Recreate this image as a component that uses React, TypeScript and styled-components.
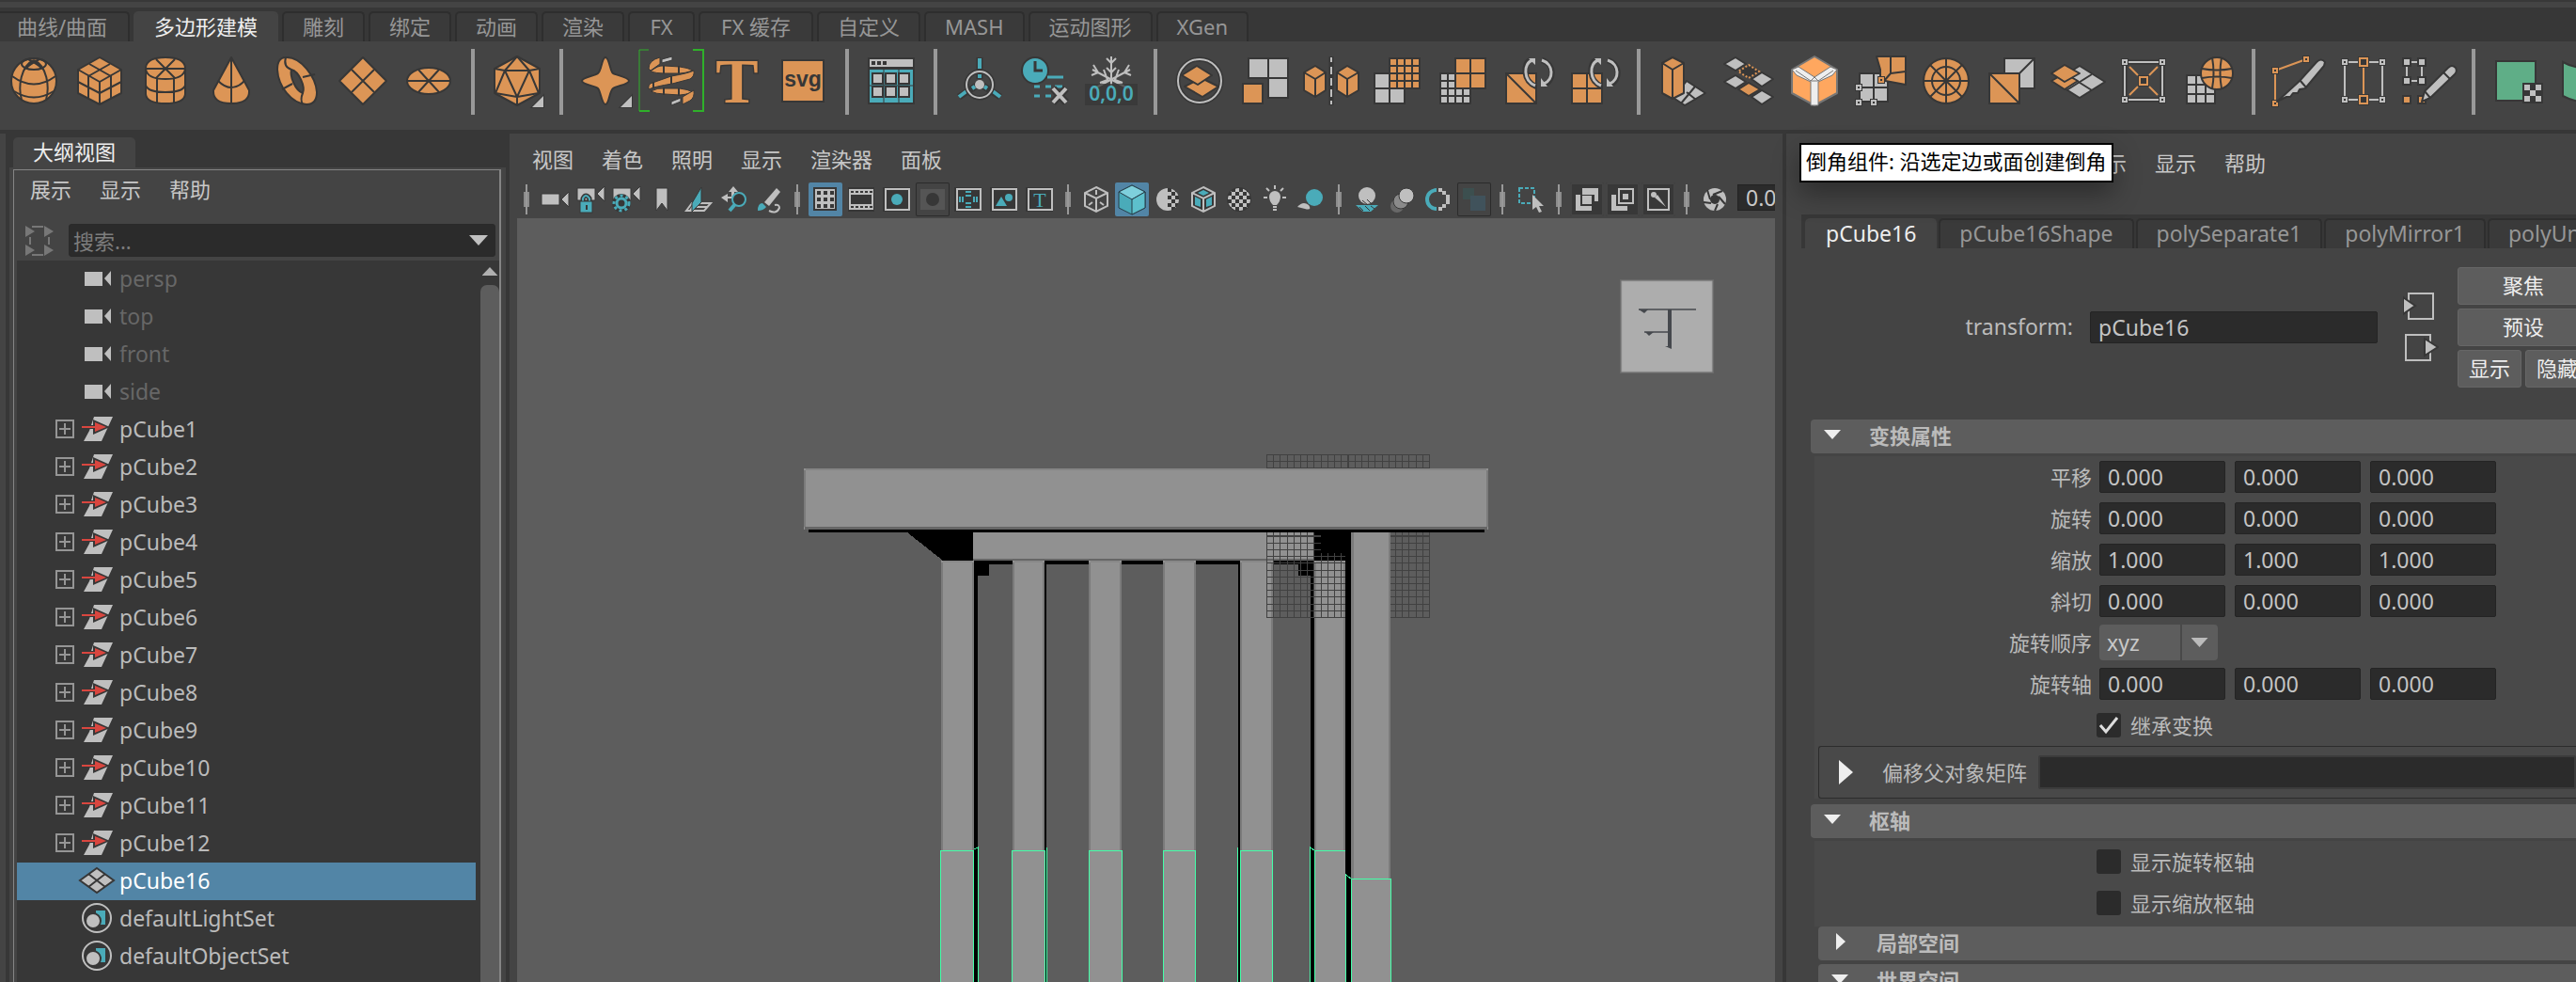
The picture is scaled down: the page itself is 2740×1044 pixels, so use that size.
import React from "react";
import styled, { createGlobalStyle, css } from "styled-components";

const O = "#dc9556";
const T = "#4aabb9";
const G = "#bfbfbf";
const D = "#373737";
const GREEN = "#43ffa8";

const Global = createGlobalStyle`
  *, *::before, *::after { box-sizing: border-box; }
  body { margin: 0; background: #444444; }
  body, button, input, select {
    font-family: "Noto Sans", "Noto Sans CJK SC", sans-serif;
    font-size: 22px;
    line-height: 30px;
  }
  button, input, select { margin: 0; padding: 0; border: 0; color: inherit; background: none; }
  ul { margin: 0; padding: 0; list-style: none; }
`;

const Page = styled.div`
  display: flex;
  flex-direction: column;
  height: 100vh;
  overflow: hidden;
  color: #bbbbbb;
  background: #444444;
`;

/* ---------- shelf ---------- */
const TopEdge = styled.div`
  flex: none;
  height: 8px;
  border-top: 2px solid #383838;
`;
const ShelfTabs = styled.div`
  display: flex;
  flex: none;
  gap: 4px;
  height: 36px;
  padding-top: 4px;
  overflow: hidden;
  background: ${D};
`;
const tabLook = css<{ $active?: boolean }>`
  flex: none;
  height: 32px;
  padding: 0 20px 2px;
  border: 2px solid #2e2e2e;
  border-bottom: 0;
  border-radius: 5px 5px 0 0;
  color: #969696;
  background: #3a3a3a;
  white-space: nowrap;
  ${(p) => p.$active && css`
    color: #eeeeee;
    background: #444444;
    border-color: #444444;
  `}
`;
const ShelfTab = styled.button<{ $active?: boolean; $min?: number }>`
  ${tabLook}
  min-width: ${(p) => p.$min ?? 88}px;
  line-height: 28px;
  &:first-child { margin-left: -6px; }
`;
const Shelf = styled.div`
  display: flex;
  flex: none;
  gap: 6px;
  height: 98px;
  padding: 8px 4px 0;
  overflow: hidden;
  border-bottom: 4px solid ${D};
`;
const ShelfButton = styled.button`
  flex: none;
  width: 64px;
  height: 68px;
  svg { display: block; width: 64px; height: 68px; overflow: visible; }
`;
const ShelfRule = styled.div`
  flex: none;
  width: 18px;
  height: 70px;
  border: solid transparent;
  border-width: 0 7px;
  background: #999999;
  background-clip: padding-box;
`;

/* ---------- shared ---------- */
const Main = styled.div`
  display: flex;
  flex: 1;
  min-height: 0;
`;
const MenuBar = styled.nav<{ $pad: string }>`
  display: flex;
  flex: none;
  gap: 30px;
  padding: ${(p) => p.$pad};
  button { flex: none; color: #c8c8c8; line-height: 30px; }
`;

/* ---------- outliner ---------- */
const Outliner = styled.aside`
  display: flex;
  flex: none;
  flex-direction: column;
  width: 542px;
  border: solid ${D};
  border-width: 0 4px 0 0;
  background: ${D};
  box-shadow: inset 6px 0 #444444;
`;
const OutlinerTab = styled.h2`
  align-self: flex-start;
  height: 32px;
  margin: 4px 0 0 14px;
  padding: 0 21px;
  border-radius: 5px 5px 0 0;
  font-size: 22px;
  font-weight: 400;
  line-height: 30px;
  color: #eeeeee;
  background: #444444;
`;
const OutlinerFrame = styled.div`
  display: flex;
  flex: 1;
  min-height: 0;
  margin-left: 10px;
  padding: 2px 5px 0 4px;
  background: #444444;
`;
const OutlinerBody = styled.div`
  display: flex;
  flex: 1;
  flex-direction: column;
  border: solid #858585;
  border-width: 1px 2px 0 1px;
`;
const SearchRow = styled.div`
  display: flex;
  align-items: center;
  gap: 16px;
  padding: 16px 4px 4px 11px;
  svg { flex: none; }
`;
const SearchBox = styled.label`
  display: flex;
  flex: 1;
  align-items: center;
  height: 35px;
  padding: 0 7px 0 4px;
  border: 1px solid #2a2a2a;
  border-radius: 3px;
  background: #2b2b2b;
  input { flex: 1; min-width: 0; outline: 0; height: 30px; }
  input::placeholder { color: #7d7d7d; opacity: 1; }
`;
const Caret = styled.span<{ $w: number; $h: number; $dir: "up" | "down" | "right"; $color: string }>`
  flex: none;
  width: ${(p) => p.$w}px;
  height: ${(p) => p.$h}px;
  background: ${(p) => p.$color};
  clip-path: ${(p) =>
    p.$dir === "down" ? "polygon(0 0, 100% 0, 50% 100%)"
      : p.$dir === "up" ? "polygon(0 100%, 50% 0, 100% 100%)"
      : "polygon(0 0, 100% 50%, 0 100%)"};
`;
const TreeArea = styled.div`
  display: flex;
  flex: 1;
  min-height: 0;
  margin-left: 3px;
  overflow: hidden;
  background: ${D};
`;
const Tree = styled.ul`
  flex: 1;
`;
const TreeRow = styled.li<{ $selected?: boolean; $dim?: boolean }>`
  display: grid;
  grid-template-columns: 20px 40px 1fr;
  align-items: center;
  column-gap: 4px;
  height: 40px;
  padding: 0 0 2px 41px;
  font-size: 23px;
  color: ${(p) => (p.$selected ? "#ffffff" : p.$dim ? "#676767" : "#bbbbbb")};
  background: ${(p) => (p.$selected ? "#5285a6" : "transparent")};
  svg { display: block; }
`;
const Expander = styled.button`
  height: 20px;
`;
const ScrollTrack = styled.div`
  display: flex;
  flex: none;
  flex-direction: column;
  align-items: center;
  gap: 10px;
  width: 25px;
  padding: 7px 0 0 5px;
`;
const ScrollThumb = styled.div`
  flex: 1;
  width: 20px;
  border-radius: 7px 7px 0 0;
  background: #5d5d5d;
`;

/* ---------- viewport ---------- */
const Viewport = styled.section`
  display: flex;
  flex: 1;
  flex-direction: column;
  min-width: 0;
`;
const ToolRow = styled.div`
  display: flex;
  flex: none;
  gap: 2px;
  height: 38px;
  margin: 0 8px;
  overflow: hidden;
`;
const Tool = styled.button<{ $on?: boolean; $boxed?: boolean; $dark?: boolean }>`
  flex: none;
  width: 36px;
  height: 36px;
  border-radius: 2px;
  background: ${(p) => (p.$on ? "#5285a6" : "transparent")};
  ${(p) => p.$boxed && css`box-shadow: inset 0 0 0 1px #2b2b2b;`}
  ${(p) => p.$dark && css`box-shadow: inset 0 0 0 2px #444444; background: #383838;`}
  svg { display: block; width: 36px; height: 36px; }
`;
const ToolRule = styled.div`
  flex: none;
  width: 20px;
  height: 36px;
  background: linear-gradient(#999999, #999999) center / 2px 32px no-repeat,
    linear-gradient(#8c8c8c, #8c8c8c) center / 6px 16px no-repeat;
`;
const Exposure = styled.input`
  flex: none;
  width: 90px;
  height: 28px;
  margin: 2px 0 0 4px;
  padding-left: 8px;
  border: 1px solid #222222;
  font-size: 23px;
  color: #c8c8c8;
  background: #2b2b2b;
`;
const Canvas = styled.div`
  flex: 1;
  min-height: 0;
  margin: 0 8px;
  overflow: hidden;
  background: #5d5d5d;
  svg { display: block; width: 100%; height: 100%; }
`;

/* ---------- attribute editor ---------- */
const Attributes = styled.aside`
  position: relative;
  flex: none;
  width: 844px;
  border-left: 4px solid ${D};
`;
const Clip = styled.div`
  height: 100%;
  overflow: hidden;
`;
const Tooltip = styled.div`
  position: absolute;
  top: 10px;
  left: 14px;
  height: 42px;
  padding: 2px 5px;
  border: 2px solid #000000;
  white-space: nowrap;
  color: #000000;
  background: #ffffff;
  box-shadow: 0 12px 28px rgba(0, 0, 0, 0.35);
`;
const AttrTabs = styled.div`
  display: flex;
  gap: 2px;
  height: 36px;
  margin-left: 16px;
  padding: 4px 0 0 4px;
  overflow: hidden;
  background: ${D};
`;
const AttrTab = styled.button<{ $active?: boolean }>`
  ${tabLook}
  font-size: 23px;
  line-height: 28px;
`;
const NodeRow = styled.div`
  display: grid;
  grid-template-columns: 305px 306px 49px 140px;
  align-items: center;
  column-gap: 18px;
  height: 168px;
  margin-bottom: 14px;
  > label { justify-self: end; padding-bottom: 2px; font-size: 23px; }
`;
const fieldLook = css`
  height: 34px;
  border: 1px solid #242424;
  border-radius: 2px;
  padding: 0 8px;
  font-size: 23px;
  color: #c4c4c4;
  background: #2b2b2b;
  outline: 0;
`;
const NameField = styled.input`
  ${fieldLook}
  width: 100%;
`;
const PortStack = styled.div`
  display: grid;
  gap: 12px;
  margin-left: 9px;
  button { height: 32px; }
  svg { display: block; }
`;
const ButtonGrid = styled.div`
  display: grid;
  grid-template-columns: 68px 68px;
  gap: 4px;
`;
const PushButton = styled.button<{ $wide?: boolean }>`
  grid-column: ${(p) => (p.$wide ? "span 2" : "auto")};
  height: 40px;
  padding-bottom: 2px;
  border: 1px solid #666666;
  border-radius: 3px;
  color: #eeeeee;
  background: #5d5d5d;
`;
const Section = styled.button<{ $nested?: boolean }>`
  display: flex;
  align-items: center;
  width: calc(100% - ${(p) => (p.$nested ? 34 : 26)}px);
  height: 36px;
  margin: 0 0 ${(p) => (p.$nested ? 4 : 3)}px ${(p) => (p.$nested ? 34 : 26)}px;
  padding-bottom: 2px;
  border-radius: 4px 0 0 4px;
  font-weight: 700;
  color: #bbbbbb;
  background: #5d5d5d;
  text-align: left;
`;
const CaretSlot = styled.span<{ $closed?: boolean }>`
  display: grid;
  place-items: center start;
  flex: none;
  width: 62px;
  padding: 0 0 2px ${(p) => (p.$closed ? 19 : 14)}px;
`;
const SectionBody = styled.div<{ $last?: boolean }>`
  margin-left: 30px;
  padding-bottom: ${(p) => (p.$last ? 3 : 0)}px;
  margin-bottom: ${(p) => (p.$last ? 0 : 6)}px;
  background: #494949;
`;
const AttrRow = styled.div`
  display: grid;
  grid-template-columns: 296px 134px 134px 134px;
  align-items: center;
  column-gap: 10px;
  height: 44px;
  margin-left: -3px;
  > :first-child { justify-self: end; margin-right: -2px; }
`;
const NumField = styled.input`
  ${fieldLook}
  width: 134px;
`;
const SelectBox = styled.span`
  display: grid;
  grid-template-columns: 87px 39px;
  align-items: center;
  width: 126px;
  height: 38px;
  border-radius: 4px;
  background: linear-gradient(#494949, #494949) 86px 0 / 2px 100% no-repeat #5d5d5d;
  select {
    grid-area: 1 / 1 / 2 / 3;
    height: 38px;
    padding: 0 8px;
    appearance: none;
    outline: 0;
    font-size: 23px;
    color: #c8c8c8;
  }
  span { grid-area: 1 / 2 / 2 / 3; justify-self: center; pointer-events: none; }
`;
const CheckRow = styled.div`
  display: flex;
  align-items: center;
  height: 44px;
  padding-left: 300px;
`;
const CheckLabel = styled.label`
  display: grid;
  grid-template-columns: 26px auto;
  align-items: center;
  column-gap: 10px;
  input {
    grid-area: 1 / 1;
    width: 26px;
    height: 26px;
    border-radius: 3px;
    appearance: none;
    background: #2b2b2b;
  }
  svg { grid-area: 1 / 1; display: none; pointer-events: none; }
  input:checked + svg { display: block; }
`;
const MatrixRow = styled.div`
  display: flex;
  align-items: center;
  height: 56px;
  margin-left: 4px;
  border: solid #2c2c2c;
  border-width: 1px 0 1px 1px;
  border-radius: 3px 0 0 3px;
  label { flex: none; margin: 0 12px 0 31px; }
  input { ${fieldLook} flex: 1; min-width: 0; height: 36px; border: 2px solid #3c3c3c; }
  button { display: grid; margin-left: 21px; }
`;

/* ---------- shelf artwork (origin at icon centre) ---------- */
const Ink = (p: { children: React.ReactNode; fill?: string; w?: number }) => (
  <g fill={p.fill ?? O} stroke={D} strokeWidth={p.w ?? 2} strokeLinejoin="round">{p.children}</g>
);
const Mesh = (p: { x: number; y: number; w: number; h: number; c?: number; r?: number; fill: string }) => {
  const c = p.c ?? 1, r = p.r ?? 1;
  const lines: React.ReactNode[] = [];
  for (let i = 1; i < c; i++) lines.push(<path key={"c" + i} d={`M${p.x + (p.w * i) / c} ${p.y}v${p.h}`} />);
  for (let i = 1; i < r; i++) lines.push(<path key={"r" + i} d={`M${p.x} ${p.y + (p.h * i) / r}h${p.w}`} />);
  return (
    <g fill={p.fill} stroke={D} strokeWidth="2">
      <rect x={p.x} y={p.y} width={p.w} height={p.h} />
      {lines}
    </g>
  );
};
const Corner = () => <path d="M28 16V28H16Z" fill={G} stroke={D} strokeWidth="2" paintOrder="stroke" />;
const Node = (p: { x: number; y: number; c: string; s?: number }) => {
  const s = p.s ?? 3;
  return (
    <g>
      <rect x={p.x - s - 1} y={p.y - s - 1} width={2 * s + 2} height={2 * s + 2} fill={D} />
      <rect x={p.x - s + 1} y={p.y - s + 1} width={2 * s - 2} height={2 * s - 2} fill={D} stroke={p.c} strokeWidth="2" />
    </g>
  );
};
const Cycle = () => (
  <g fill="none" stroke={G} strokeWidth="3">
    <path d="M8 6C-7 0-6-20 2-22M14-22C28-18 28 0 16 4" stroke={D} strokeWidth="6" />
    <path d="M7 5C-6 0-6-19 4-22M14-22C27-18 27-1 16 3" />
    <path d="M0-24H7V-17ZM13-3V6H20Z" fill={G} stroke="none" />
  </g>
);

const art: Record<string, React.ReactNode> = {
  sphere: (
    <Ink><circle r="24" />
      <g fill="none"><ellipse cx="0" cy="-18" rx="13" ry="6" /><path d="M-23-5Q0 12 23-5M-21 11Q0 24 21 11M0-22C-14-16-17 6-13 20M0-22C14-16 17 6 13 20M-6-23Q4-18 9-13M6-23Q-4-18-9-13" /></g>
    </Ink>
  ),
  cube: (
    <Ink><path d="M0-25L23-12V13L0 25L-23 13V-12Z" />
      <path fill="none" d="M-23-12L0 1L23-12M0 1V25M-11-18L12-5V19M11-18L-12-5V19M-23 1L0 13L23 1" /></Ink>
  ),
  cylinder: (
    <Ink><path d="M-21-14Q-20-25 0-25T21-14V14Q20 24 0 24T-21 14Z" />
      <path fill="none" d="M-21-13Q-20-2 0-2T21-13M-21-13H21M-10-23L10-3M10-23L-10-3M-9-2V24M9-2V24M-21 5Q-18 12 0 12T21 5" /></Ink>
  ),
  cone: (
    <Ink><path d="M0-25L19 10Q20 24 0 24T-19 10Z" /><path fill="none" d="M0-25V24M-14 0Q0 14 14 0" /></Ink>
  ),
  torus: (
    <Ink><path fillRule="evenodd" d="M-12-25C4-26 20-4 21 12C21 21 17 25 10 25C-6 24-20 6-21-12C-21-21-18-25-12-25ZM-6-12C-8-5-2 10 6 13C9 6 2-10-6-12Z" />
      <path fill="none" d="M-12-25Q-15-15-6-12M6-4L19-7M-5 3L-16 9M6 13Q3 20 6 25" /></Ink>
  ),
  plane: <Ink><path d="M0-25L25 0L0 25L-25 0Z" /><path d="M-12-12L12 12M12-12L-12 12" /></Ink>,
  disc: <Ink><ellipse rx="23" ry="14" /><path d="M-23 0H23M-11-12L11 12M11-12L-11 12" /></Ink>,
  solid: (
    <><Ink><path d="M0-26L24-13V13L0 26L-24 13V-13Z" />
      <path fill="none" d="M0-26L-13-11H13ZM-24-13L-13-11L-23 13L0 17L23 13L13-11L24-13M-13-11L0 17L13-11M0 17V26" /></Ink><Corner /></>
  ),
  star: (
    <><Ink><path d="M0-25C4-25 5-10 8-8S25-4 25 0S12 5 8 8S4 25 0 25S-5 11-8 8S-25 4-25 0S-12-5-8-8S-4-25 0-25Z" /></Ink><Corner /></>
  ),
  sweep: (
    <>
      <path d="M-24-33H-34V32H-24" fill="none" stroke="#2fb02a" strokeWidth="1" />
      <path d="M-34 32H-23M23 32H34V-33H23" fill="none" stroke="#2fb02a" strokeWidth="2" />
      <Ink w={1}>
        <path d="M-24-13Q-24-22-12-25V-18L-22-11Z" />
        <path fill={G} d="M-10-23L1-26V-22L-10-19Z" />
        <path d="M-22-10Q-14-17-8-16H-7L9-15Q18-14 23-11Q14-8 9-8H-7Q-16-8-22-10Z" />
        <path d="M-24 9Q-25 3-20 2L0-5Q18-8 24-11Q25-5 20-2L1 3Q-18 6-24 9Z" />
        <path d="M-22 11Q-14 7-7 8L9 8Q18 9 23 12Q14 15 9 15L-7 14Q-16 14-22 11Z" />
        <path d="M24 10Q25 18 20 21L12 25V17Z" />
        <path fill={G} d="M0 22L10 18V22L0 26Z" />
      </Ink>
      <path d="M-8-16V-8M8-16V-8M0-5V3M-19 1V8M-8 7V15M8 8V16" stroke={D} strokeWidth="2" />
    </>
  ),
  type: (
    <text x="0" y="23" textAnchor="middle" fontFamily="Liberation Serif, serif" fontWeight="700" fontSize="68" fill={O} stroke={D} strokeWidth="3" paintOrder="stroke">T</text>
  ),
  svg: (
    <><rect x="-22" y="-22" width="44" height="44" fill={O} stroke={D} strokeWidth="2" />
      <text x="0" y="6" textAnchor="middle" fontFamily="Liberation Sans, sans-serif" fontWeight="700" fontSize="23" fill={D}>svg</text></>
  ),
  panel: (
    <><rect x="-25" y="-25" width="50" height="50" fill={D} /><rect x="-23" y="-23" width="46" height="8" fill={G} />
      <path d="M-21-21h4v4h-4zM-15-21h4v4h-4zM-9-21h4v4h-4z" fill={D} /><rect x="-23" y="-12" width="46" height="35" fill={T} />
      {[-20, -6, 8].map((x) => [-8, 6].map((y) => <rect key={x + "," + y} x={x} y={y} width="11" height="11" fill={G} stroke={D} strokeWidth="2" />))}
      <path d="M-8-12V23M8-12V23M-23 5H23" stroke={D} /></>
  ),
  joint: (
    <><path d="M0-25V-2M-22 17L0 3L22 17" fill="none" stroke={D} strokeWidth="7" /><path d="M0-24V-13M0-7V-3M-22 17L-14 11M22 17L14 11M-8 8L-5 6M8 8L5 6" stroke={T} strokeWidth="4" />
      <circle cy="4" r="14" fill="none" stroke={D} strokeWidth="5" /><circle cy="4" r="14" fill="none" stroke={G} strokeWidth="2" /><circle cy="4" r="5" fill={G} /></>
  ),
  history: (
    <><circle cx="-11" cy="-11" r="14" fill={T} stroke={D} strokeWidth="2" /><path d="M-11-21V-11H-3" fill="none" stroke={D} strokeWidth="3" />
      <path d="M2-4H19M-12 6H-6M0 6H6M10 6H18M-12 16H-6M0 16H6" stroke={T} strokeWidth="3" /><path d="M8 8L22 23M22 8L8 23" stroke={D} strokeWidth="8" /><path d="M8 8L22 23M22 8L8 23" stroke={G} strokeWidth="4" /></>
  ),
  freeze: (
    <><g stroke={G} strokeWidth="2" fill="none"><path d="M0-26V6M-20-12L18 8M20-12L-18 8M-5-24L0-19L5-24M-5-14L0-9L5-14M-19-17L-14-9L-21-6M19-17L14-9L21-6M-8-12L-4-1L-12 2M8-12L4-1L12 2" /></g>
      <rect x="-28" y="3" width="56" height="23" fill={D} opacity=".75" />
      <text x="0" y="21" textAnchor="middle" fontFamily="Noto Sans, sans-serif" fontWeight="600" fontSize="21" fill={T}>0,0,0</text></>
  ),
  layers: (
    <><circle r="23" fill="none" stroke={D} strokeWidth="5" /><circle r="23" fill="none" stroke={G} strokeWidth="2" />
      <Ink><path d="M2-3L20 6L3 17L-16 6Z" /><path d="M-3-16L13-6L-2 4L-19-6Z" /></Ink></>
  ),
  separate: (
    <><Mesh x={-18} y={-24} w={42} h={21} c={2} fill={G} /><Mesh x={3} y={-3} w={21} h={21} fill={G} /><Mesh x={-24} y={3} w={21} h={21} fill={O} /></>
  ),
  mirror: (
    <><path d="M0-26V26" stroke={D} strokeWidth="5" /><path d="M0-25v5M0-15v8M0-3v8M0 9v8M0 21v4" stroke={G} strokeWidth="2" />
      <Ink><path d="M17-16L29-9V10L17 17L6 10V-9Z" /><path fill="none" d="M6-9L17-2L29-9M17-2V17" /><path d="M-17-16L-29-9V10L-17 17L-6 10V-9Z" /><path fill="none" d="M-6-9L-17-2L-29-9M-17-2V17" /></Ink></>
  ),
  smooth: (
    <><Mesh x={-24} y={-8} w={32} h={32} c={2} r={2} fill={G} /><Mesh x={-8} y={-24} w={32} h={32} c={4} r={4} fill={O} /></>
  ),
  reduce: (
    <><Mesh x={-24} y={-8} w={32} h={32} c={4} r={4} fill={G} /><Mesh x={-8} y={-24} w={32} h={32} c={2} r={2} fill={O} /></>
  ),
  triangulate: <><Mesh x={-24} y={-8} w={32} h={32} fill={O} /><path d="M-24-8L8 24" stroke={D} strokeWidth="2" /><Cycle /></>,
  quad: <><Mesh x={-24} y={-8} w={32} h={32} c={2} r={2} fill={O} /><Cycle /></>,
  extrude: (
    <><Ink fill={G}><path d="M4 0L24 13L2 26L-10 18Z" /><path d="M13 6L-2 24M4 12L14 20" /></Ink>
      <Ink><path d="M-11-25L1-19V13L-11 19L-22 13V-19Z" /><path fill="none" d="M-22-19L-11-12L1-19M-11-12V19" /></Ink></>
  ),
  bridge: (
    <><Ink fill={G}><path d="M-14-25L-3-18L-14-11L-26-18Z" /><path d="M14-9L26-2L14 6L3-2Z" /><path d="M-14-6L-3 1L-14 8L-26 1Z" /><path fill={O} d="M0 2L12 9L0 16L-11 9Z" /><path d="M14 10L26 17L14 25L3 17Z" /></Ink>
      <path d="M0-17L11-10L0-3L-11-10Z" fill={D} stroke={O} strokeWidth="2" strokeDasharray="2 2" /></>
  ),
  bevel: (
    <g stroke="#767676" strokeWidth="2" strokeLinejoin="round"><path d="M0-26L24-12V13L0 26L-24 13V-12Z" fill="#ffa75f" />
      <path d="M-24-12L-17-15L0-4L17-15L24-12L19-6L4 1V26H-4V1L-19-6Z" fill="#eeeeee" strokeWidth="1" /><path d="M-20-11L-4 0L0-4L4 0L20-11M-4 0H4" fill="none" strokeWidth="1" /></g>
  ),
  boolean: (
    <><Mesh x={-22} y={-8} w={30} h={30} c={2} r={2} fill={G} /><Ink><path d="M-4-26H27V4L0-1V-12Z" /><path d="M11-26V-8L27-10M11-8L4 0" /></Ink>
      <Node x={1} y={-1} c={O} /><Node x={-23} y={7} c={G} /><Node x={-23} y={23} c={G} /><Node x={-7} y={23} c={G} /></>
  ),
  circularize: (
    <Ink><circle r="24" /><circle r="15" fill="none" /><path d="M-24 0H24M0-24V24M-17-17L17 17M17-17L-17 17" /></Ink>
  ),
  wedge: (
    <><Mesh x={-8} y={-24} w={32} h={32} fill={G} /><path d="M24-24L-8 8" stroke={D} strokeWidth="2" /><Mesh x={-24} y={-8} w={32} h={32} fill={O} /><path d="M-24-8L8 24" stroke={D} strokeWidth="2" /></>
  ),
  duplicate: (
    <><Ink fill={G}><path d="M2-16L29 1L2 18L-25 1Z" /><path d="M-12-7L15 10M15-7L-12 10" /></Ink><Ink><path d="M-14-8L0 0L-14 9L-28 0Z" /><path d="M-14-17L2-8L-14 1L-28-8Z" /></Ink></>
  ),
  quadDraw: (
    <><rect x="-20" y="-20" width="40" height="40" fill="none" stroke={D} strokeWidth="5" /><rect x="-20" y="-20" width="40" height="40" fill="none" stroke={G} strokeWidth="2" />
      <path d="M-15-15L-6-6M15-15L6-6M-15 15L-6 6M15 15L6 6" stroke={O} strokeWidth="2" />
      <Node x={0} y={0} c={O} s={5} /><Node x={-20} y={-20} c={G} /><Node x={20} y={-20} c={G} /><Node x={-20} y={20} c={G} /><Node x={20} y={20} c={G} /></>
  ),
  project: (
    <><Mesh x={-24} y={-6} w={30} h={30} c={3} r={3} fill={G} /><Ink><circle cx="8" cy="-8" r="17" /><path fill="none" d="M-8-13Q8-10 24-13M-8-3Q8-6 24-3M3-25Q6-8 3 8M13-25Q10-8 13 8" /></Ink></>
  ),
  multicut: (
    <><path d="M-24 24V-11L9-23" fill="none" stroke={O} strokeWidth="2" /><Node x={9} y={-23} c={O} /><Node x={-24} y={-11} c={O} /><Node x={-24} y={24} c={O} />
      <Ink fill={G}><path d="M-22 22L2 0L20-20Q25-25 29-20L28-16L8 8L2 9L0 13L-5 13L-8 17L-12 17Z" /><path d="M2-1L9 7" /></Ink></>
  ),
  connect: (
    <><path d="M-20-20H20M-20 20H20M-20-20V20M20-20V20" stroke={G} strokeWidth="2" /><path d="M0-20V20" stroke={O} strokeWidth="2" />
      <Node x={-20} y={-20} c={G} /><Node x={20} y={-20} c={G} /><Node x={-20} y={20} c={G} /><Node x={20} y={20} c={G} /><Node x={0} y={-20} c={O} s={5} /><Node x={0} y={20} c={O} s={5} /></>
  ),
  sculpt: (
    <><path d="M-24-20H-8V0H-24Z" fill="none" stroke={G} strokeWidth="2" /><g fill={G} stroke={D} strokeWidth="2"><path d="M-28-24h8v8h-8zM-12-24h8v8h-8zM-28-4h8v8h-8zM-12-4h8v8h-8z" /></g>
      <path d="M-28 16h8v8h-8zM-12 16h8v8h-8z" fill={O} stroke={D} strokeWidth="2" />
      <Ink fill={G}><path d="M-8 22L-5 11L20-14Q24-18 28-14Q30-10 27-7L1 18Z" /><path d="M-5 11L1 18M15-9L22-2" /></Ink></>
  ),
  uv: (
    <><rect x="-23" y="-21" width="42" height="42" fill="#5fae87" stroke={D} strokeWidth="2" /><rect x="5" y="2" width="22" height="22" fill={D} />
      <path d="M7 4h6v6h-6zM19 4h6v6h-6zM13 10h6v6h-6zM7 16h6v6h-6zM19 16h6v6h-6z" fill={G} /></>
  ),
  uvCylinder: <path d="M-22-20Q0-8 22-20V16Q0 28-22 16Z" fill="#5fae87" stroke={D} strokeWidth="2" />,
};
const shelfItems = [
  "sphere", "cube", "cylinder", "cone", "torus", "plane", "disc", "|", "solid", "|", "star", "sweep", "type", "svg", "|",
  "panel", "|", "joint", "history", "freeze", "|", "layers", "separate", "mirror", "smooth", "reduce", "triangulate", "quad", "|",
  "extrude", "bridge", "bevel", "boolean", "circularize", "wedge", "duplicate", "quadDraw", "project", "|",
  "multicut", "connect", "sculpt", "|", "uv", "uvCylinder",
];
const shelfTabs: [string, number?][] = [
  ["曲线/曲面", 144], ["多边形建模"], ["雕刻"], ["绑定"], ["动画"], ["渲染"], ["FX", 71], ["FX 缓存", 122],
  ["自定义"], ["MASH"], ["运动图形"], ["XGen"],
];

/* ---------- viewport toolbar artwork ---------- */
const Frame = (p: { children?: React.ReactNode }) => (
  <><rect x="-15" y="-13" width="29" height="26" fill={D} /><rect x="-12" y="-11" width="25" height="22" fill="none" stroke={G} strokeWidth="2" />{p.children}</>
);
const MiniCam = () => <path d="M-14-12H5V1H-14ZM7-6L15-14V2Z" fill={G} stroke={D} strokeWidth="1" />;
const checks = (left: number) => {
  const out: React.ReactNode[] = [];
  for (let i = left; i < 3; i++) for (let j = -3; j < 3; j++) if ((i + j) % 2 === 0) out.push(<rect key={i + "," + j} x={i * 4} y={j * 4} width="4" height="4" />);
  return <g clipPath="url(#roundMask)">{out}</g>;
};
const tools: Record<string, React.ReactNode> = {
  camera: <path d="M-14-6H5V6H-14ZM7 0L15-8V8Z" fill={G} stroke={D} strokeWidth="1" />,
  lock: <><MiniCam /><path d="M-8 2V-1Q-5-7-1-1V2" fill="none" stroke={D} strokeWidth="5" /><path d="M-8 2V-1Q-5-7-1-1V2" fill="none" stroke={T} strokeWidth="2" /><rect x="-11" y="2" width="13" height="12" fill={T} stroke={D} /><path d="M-4 6V11" stroke={D} strokeWidth="2" /></>,
  gear: <><MiniCam /><circle cx="-5" cy="4" r="10" fill={D} /><circle cx="-5" cy="4" r="8" fill="none" stroke={T} strokeWidth="3" strokeDasharray="3 3" /><circle cx="-5" cy="4" r="5" fill="none" stroke={T} strokeWidth="3" /></>,
  bookmark: <path d="M-6-12H6V12L0 4L-6 12Z" fill={G} stroke={D} />,
  image: <><path d="M-12 12L-6 4H14L7 12Z" fill="none" stroke={G} strokeWidth="2" /><path d="M-4 8H10M-8 12L0 0" stroke={G} strokeWidth="2" /><path d="M-6 4L4-13V3L-6 13Z" fill={T} stroke={D} /></>,
  zoom: <><path d="M0-14L5-8H1V-1H-6V3L-13-2L-6-6V-3H-2V-8H-5Z" fill={G} /><circle cx="6" cy="0" r="7" fill={D} stroke={T} strokeWidth="2" /><path d="M2 5L-4 12" stroke={T} strokeWidth="4" /></>,
  pencil: <><path d="M-5 3L8-12L12-8L0 7Z" fill={G} /><path d="M-12 12Q-12 4-7 4L-3 8Q-6 12-12 12Z" fill={T} /><path d="M0 12Q8 16 11 9Q11 5 6 6" fill="none" stroke={G} strokeWidth="2" /></>,
  grid: <><rect x="-13" y="-13" width="25" height="25" fill={D} /><rect x="-11" y="-11" width="21" height="21" fill={G} />{[-9, -2, 5].map((x) => [-9, -2, 5].map((y) => <rect key={x + "," + y} x={x} y={y} width="4" height="4" fill={D} />))}</>,
  film: <><rect x="-14" y="-13" width="28" height="26" fill={D} /><rect x="-13" y="-11" width="26" height="22" fill={G} /><rect x="-11" y="-5" width="22" height="10" fill={D} /><path d="M-11-8H12M-11 8H12" stroke={D} strokeWidth="2" strokeDasharray="3 2" /></>,
  gate: <Frame><circle r="6" fill={T} /></Frame>,
  mask: <><rect x="-13" y="-11" width="26" height="22" fill="#555555" /><circle r="7" fill={D} /></>,
  chart: <Frame><path d="M-3-8H3M-3-4H3M-3 4H3M-3 8H3M-9-3V3M-6-3V3M9-3V3M6-3V3" stroke={T} strokeWidth="2" /></Frame>,
  safe: <Frame><path d="M-9 7L-3-3L3 7Z" fill={T} /><circle cx="5" cy="-2" r="4" fill={T} /></Frame>,
  title: <Frame><text x="0" y="8" textAnchor="middle" fontFamily="Liberation Serif, serif" fontSize="22" fill={T}>T</text></Frame>,
  wire: <g fill="none" stroke={G} strokeWidth="2"><path d="M0-13L12-7V7L0 13L-12 7V-7ZM-12-7L0-1L12-7M0-1V13M0-10V-5M-8 6L-4 3M8 6L4 3" /></g>,
  shaded: <g stroke="#263d49" strokeLinejoin="round"><path d="M0-15L14-8V9L0 16L-14 9V-8Z" fill={T} /><path d="M0-15L14-8L0 0L-14-8Z" fill="#7ed0dc" /><path d="M14-8V9L0 16V0Z" fill="#5dc0cc" /></g>,
  half: <g fill={G}><circle r="12" fill={D} /><path d="M0-12A12 12 0 0 0 0 12Z" />{checks(0)}</g>,
  texture: <g stroke={G} strokeWidth="2" fill={D}><path d="M0-13L12-7V7L0 13L-12 7V-7Z" /><path fill="none" d="M-12-7L0-1L12-7M0-1V13" /><path stroke="none" fill={T} d="M0-10L6-7L0-4L-6-7ZM-9-3L-3 0V8L-9 6ZM9-3L3 0V8L9 6Z" /></g>,
  alpha: <g fill={G}><circle r="13" fill={D} />{checks(-3)}</g>,
  light: <><path d="M-6-3A6 6 0 0 1 6-3Q6 2 2 6H-2Q-6 2-6-3Z" fill={G} /><path d="M0-15V-11M-9-12L-6-9M9-12L6-9M-12-2H-8M12-2H8M-2 8H2M-2 11H2" stroke={G} strokeWidth="2" /></>,
  shadow: <><circle cx="4" cy="-2" r="9" fill={T} /><path d="M-14 8Q-8 1-2 6Q2 12-6 10Z" fill={G} /></>,
  ao: <><circle cy="-4" r="9" fill={G} /><path d="M-12 6H12L4 13H-4Z" fill={T} /><path d="M-5 1L1 6M0 0L5 5M-8 8L-4 12M-2 7L3 12M4 7L8 10" stroke={D} /></>,
  blur: <><circle cx="-6" cy="7" r="7" fill="#686868" /><circle cx="-2" cy="2" r="8" fill="#8a8a8a" stroke={D} /><circle cx="4" cy="-4" r="8" fill={G} stroke={D} /></>,
  aa: <><path d="M-2-10A10 10 0 0 0-2 10" fill="none" stroke={T} strokeWidth="4" /><path d="M0-12h4v4h-4zM4-9h4v4h-4zM8-5h4v10h-4zM4 5h4v4h-4zM0 8h4v4h-4z" fill={G} /></>,
  peel: <><path d="M-12-12H0V0H-12Z" fill="#3c4f4f" /><rect x="-4" y="-4" width="16" height="16" fill="#40525b" /></>,
  isolate: <><rect x="-12" y="-12" width="16" height="16" fill="none" stroke={T} strokeWidth="2" strokeDasharray="4 2" /><path d="M2-5L14 7L9 7L12 13L9 14L6 8L2 11Z" fill={G} /></>,
  copy: <><path d="M-12-5H-7V7H5V12H-12Z" fill={G} /><path d="M-5-12H12V2H8V-5H-5Z" fill={G} /><rect x="-5" y="-4" width="10" height="9" fill={G} /></>,
  paste: <><path d="M-12-5H-7V7H5V12H-12Z" fill={G} /><rect x="-4" y="-11" width="15" height="15" fill="none" stroke={G} strokeWidth="2" /><rect x="0" y="-6" width="6" height="6" fill={G} /></>,
  magnify: <><rect x="-11" y="-11" width="22" height="22" fill="none" stroke={G} strokeWidth="2" /><circle cx="-5" cy="-5" r="3" fill={G} /><path d="M-4-2L-1-5L8 8Z" fill={G} /></>,
  iris: <><circle r="12" fill={G} /><circle r="5" fill={D} /><path d="M-5 0L-8-10M-2-5L8-9M4-3L11 5M3 5L0 12M-4 4L-12 3" stroke={D} strokeWidth="2" /></>,
};
const toolItems = [
  "|", "camera", "lock", "gear", "bookmark", "image", "zoom", "pencil", "|", "grid", "film", "gate", "mask", "chart", "safe", "title", "|",
  "wire", "shaded", "half", "texture", "alpha", "light", "shadow", "|", "ao", "blur", "aa", "peel", "|", "isolate", "|",
  "copy", "paste", "magnify", "|", "iris",
];

/* ---------- scene ---------- */
const legs: [number, number][] = [[1001, 35], [1077, 34], [1158, 35], [1237, 35], [1319, 35], [1398, 33]];
const Scene = () => {
  const cols = Array.from({ length: 25 }, (_, i) => Math.round(1347 + (i * 173) / 24));
  const rows = Array.from({ length: 25 }, (_, i) => Math.round(483 + (i * 173) / 24));
  return (
    <svg viewBox="550 232 1338 812" preserveAspectRatio="xMidYMin slice">
      <defs>
        <clipPath id="gridFloor"><path d="M1347 483H1522V658H1479V566H1437V499H1347ZM1347 566H1405V588H1431V658H1347Z" /></clipPath>
        <clipPath id="roundMask"><circle r="12" /></clipPath>
      </defs>
      <g shapeRendering="crispEdges">
        <path d="M1036 596H1398V600H1036ZM1036 596H1040V1044H1036ZM1040 600H1052V612H1040ZM1111 600H1113V1044H1111ZM1317 600H1319V1044H1317ZM1394 600H1398V1044H1394ZM1381 600H1398V612H1381Z" />
        {legs.map(([x, w]) => (
          <g key={x}>
            <rect x={x} y="596" width={w} height="448" fill="#919191" />
            <path d={`M${x} 598h2v306h-2zM${x + w - 2} 598h2v306h-2z`} fill="#7b7b7b" />
            <rect x={x + 2} y="596" width={w - 4} height="2" fill="#888888" />
          </g>
        ))}
        <path d="M965 566H1035V596H1003Z" />
        <rect x="1035" y="566" width="363" height="28" fill="#919191" />
        <rect x="1035" y="594" width="363" height="2" fill="#666666" />
        <path d="M1398 566H1437V596H1398ZM1431 596H1437V1044H1431Z" />
        <g clipPath="url(#gridFloor)" fill="#414141">
          {cols.map((x) => <rect key={x} x={x} y="483" width="1" height="174" />)}
          {rows.map((y) => <rect key={y} x="1347" y={y} width="174" height="1" />)}
          <rect x="1433" y="483" width="2" height="16" /><rect x="1346" y="569" width="175" height="2" />
        </g>
        <rect x="1437" y="566" width="42" height="478" fill="#919191" />
        <path d="M1437 566h3v368h-3zM1477 566h2v368h-2z" fill="#7b7b7b" />
        <rect x="855" y="498" width="728" height="65" fill="#919191" />
        <rect x="857" y="498" width="724" height="2" fill="#858585" />
        <path d="M855 500h2v60h-2zM1581 500h2v60h-2z" fill="#7b7b7b" />
        <rect x="856" y="560" width="726" height="3" fill="#666666" />
        <rect x="860" y="563" width="719" height="3" />
        <g fill="none" stroke={GREEN} strokeWidth="1">
          <path d="M1000.500 1044V904.500H1035.500V1044M1036 903L1040.500 901V1044M1076.500 1044V904.500H1111.500V1044M1113.500 901V1044M1158.500 1044V904.500H1193V1044M1237.500 1044V904.500H1271.500V1044M1319.500 1044V904.500H1353.500V1044M1316.500 1044V901M1431 904.500H1398.500V1044M1398 904L1393.500 901V1044M1437.500 1044V934.500H1479.500V1044M1437 934L1431.500 930V1044" />
        </g>
      </g>
      <rect x="1724" y="298" width="98" height="98" fill="#adadad" stroke="#6b6b6b" strokeWidth="2" />
      <rect x="1725" y="299" width="96" height="96" fill="none" stroke="#a2a2a2" />
      <g fill="#45484d">
        <rect x="1774" y="329" width="4" height="40" /><rect x="1743" y="328" width="61" height="2" opacity=".75" /><rect x="1749" y="352" width="25" height="2" opacity=".75" />
        <path d="M1743 329H1753L1749 333ZM1750 353H1759L1754 357ZM1771 368H1778V371Z" />
      </g>
    </svg>
  );
};

/* ---------- outliner rows ---------- */
const CamIcon = () => <svg width="40" height="30" viewBox="0 0 40 30"><path d="M7 8H26V23H7ZM28 15L35 7V23Z" fill={G} /></svg>;
const GroupIcon = () => (
  <svg width="40" height="30" viewBox="0 0 40 30"><path d="M17 2H37L25 28H6L12 17L14 11Z" fill={G} /><path d="M4 13H18V8L29 13L18 18V13" fill="none" stroke={D} strokeWidth="4" /><path d="M4 13H19" stroke="#d9463f" strokeWidth="2" /><path d="M18 8L30 13L18 18Z" fill="#d9463f" /></svg>
);
const MeshIcon = () => <svg width="40" height="30" viewBox="0 0 40 30"><path d="M20 2L38 15L20 28L2 15Z" fill={G} stroke={D} strokeWidth="2" /><path d="M11 8L29 22M29 8L11 22" stroke={D} strokeWidth="2" /></svg>;
const SetIcon = () => <svg width="40" height="34" viewBox="0 0 40 34"><circle cx="20" cy="17" r="15" fill="none" stroke={G} strokeWidth="2" /><path d="M19 9H29V24H19Z" fill={T} /><circle cx="16" cy="20" r="8" fill={G} stroke={D} strokeWidth="2" /></svg>;
const PlusIcon = () => <svg width="20" height="20" viewBox="0 0 20 20"><path d="M1 1H19V19H1ZM4 10H16M10 4V16" fill="none" stroke="#959595" strokeWidth="2" /></svg>;

const vectorRows: [string, string][] = [["平移", "0.000"], ["旋转", "0.000"], ["缩放", "1.000"], ["斜切", "0.000"]];
const Vector = ({ label, value }: { label: string; value: string }) => (
  <AttrRow>
    <label htmlFor={`${label}-0`}>{label}</label>
    {["X", "Y", "Z"].map((axis, i) => <NumField key={axis} id={`${label}-${i}`} aria-label={`${label} ${axis}`} defaultValue={value} />)}
  </AttrRow>
);
const Check = ({ text, on }: { text: string; on?: boolean }) => (
  <CheckRow>
    <CheckLabel>
      <input type="checkbox" defaultChecked={on} />
      <svg width="26" height="26" viewBox="0 0 26 26"><path d="M4 13L10 20L22 5" fill="none" stroke="#dddddd" strokeWidth="3" /></svg>
      <span>{text}</span>
    </CheckLabel>
  </CheckRow>
);
const Header = ({ text, nested, closed }: { text: string; nested?: boolean; closed?: boolean }) => (
  <Section $nested={nested}>
    <CaretSlot $closed={closed}>{closed ? <Caret $w={10} $h={18} $dir="right" $color="#eeeeee" /> : <Caret $w={18} $h={10} $dir="down" $color="#eeeeee" />}</CaretSlot>
    {text}
  </Section>
);

export default function App() {
  return (
    <Page>
      <Global />
      <TopEdge />
      <ShelfTabs>
        {shelfTabs.map(([name, min]) => <ShelfTab key={name} $min={min} $active={name === "多边形建模"}>{name}</ShelfTab>)}
      </ShelfTabs>
      <Shelf>
        {shelfItems.map((id, i) => id === "|" ? <ShelfRule key={i} /> : (
          <ShelfButton key={i} aria-label={id}><svg viewBox="-32 -34 64 68">{art[id]}</svg></ShelfButton>
        ))}
      </Shelf>
      <Main>
        <Outliner>
          <OutlinerTab>大纲视图</OutlinerTab>
          <OutlinerFrame>
            <OutlinerBody>
              <MenuBar $pad="5px 17px 6px"><button>展示</button><button>显示</button><button>帮助</button></MenuBar>
              <SearchRow>
                <svg width="31" height="34" viewBox="0 0 31 34" fill="#777777"><path d="M1 1L11 7L1 13ZM21 1L31 7L21 13ZM1 21L11 27L1 33ZM21 21L31 27L21 33ZM8 1H20V3H8ZM8 31H20V33H8ZM5 13H7V21H5ZM25 13H27V21H25Z" /></svg>
                <SearchBox><input placeholder="搜索..." aria-label="搜索" /><Caret $w={20} $h={11} $dir="down" $color="#c0c0c0" /></SearchBox>
              </SearchRow>
              <TreeArea>
                <Tree>
                  {["persp", "top", "front", "side"].map((n) => <TreeRow key={n} $dim><span /><CamIcon />{n}</TreeRow>)}
                  {Array.from({ length: 12 }, (_, i) => (
                    <TreeRow key={i}><Expander aria-label={`pCube${i + 1}`}><PlusIcon /></Expander><GroupIcon />{`pCube${i + 1}`}</TreeRow>
                  ))}
                  <TreeRow $selected><span /><MeshIcon />pCube16</TreeRow>
                  {["defaultLightSet", "defaultObjectSet"].map((n) => <TreeRow key={n}><span /><SetIcon />{n}</TreeRow>)}
                </Tree>
                <ScrollTrack><Caret $w={17} $h={9} $dir="up" $color="#b0b0b0" /><ScrollThumb /></ScrollTrack>
              </TreeArea>
            </OutlinerBody>
          </OutlinerFrame>
        </Outliner>

        <Viewport>
          <MenuBar $pad="12px 24px 10px">
            {["视图", "着色", "照明", "显示", "渲染器", "面板"].map((m) => <button key={m}>{m}</button>)}
          </MenuBar>
          <ToolRow>
            {toolItems.map((id, i) => id === "|" ? <ToolRule key={i} /> : (
              <Tool key={i} aria-label={id} $on={id === "grid" || id === "shaded"} $boxed={id === "mask" || id === "peel"} $dark={id === "copy" || id === "paste" || id === "magnify"}>
                <svg viewBox="-18 -18 36 36">{tools[id]}</svg>
              </Tool>
            ))}
            <Exposure aria-label="曝光" defaultValue="0.00" />
          </ToolRow>
          <Canvas><Scene /></Canvas>
        </Viewport>

        <Attributes>
          <Clip>
            <MenuBar $pad="16px 0 40px 318px"><button>展示</button><button>显示</button><button>帮助</button></MenuBar>
            <AttrTabs>
              {["pCube16", "pCube16Shape", "polySeparate1", "polyMirror1", "polyUnite1"].map((t, i) => <AttrTab key={t} $active={i === 0}>{t}</AttrTab>)}
            </AttrTabs>
            <NodeRow>
              <label htmlFor="node-name">transform:</label>
              <NameField id="node-name" defaultValue="pCube16" />
              <PortStack>
                <button aria-label="输入"><svg width="38" height="32" viewBox="0 0 38 32"><path d="M6 2H32V29H6Z" fill="none" stroke={G} strokeWidth="2" /><path d="M0 6L13 15L0 24Z" fill={G} stroke={D} strokeWidth="2" /></svg></button>
                <button aria-label="输出"><svg width="38" height="32" viewBox="0 0 38 32"><path d="M3 2H29V29H3Z" fill="none" stroke={G} strokeWidth="2" /><path d="M23 6L37 15L23 24Z" fill={G} stroke={D} strokeWidth="2" /></svg></button>
              </PortStack>
              <ButtonGrid>
                <PushButton $wide>聚焦</PushButton><PushButton $wide>预设</PushButton><PushButton>显示</PushButton><PushButton>隐藏</PushButton>
              </ButtonGrid>
            </NodeRow>
            <Header text="变换属性" />
            <SectionBody>
              {vectorRows.map(([l, v]) => <Vector key={l} label={l} value={v} />)}
              <AttrRow>
                <label htmlFor="order">旋转顺序</label>
                <SelectBox><select id="order" defaultValue="xyz"><option>xyz</option><option>yzx</option><option>zxy</option></select><Caret $w={18} $h={10} $dir="down" $color="#bbbbbb" /></SelectBox>
              </AttrRow>
              <Vector label="旋转轴" value="0.000" />
              <Check text="继承变换" on />
              <MatrixRow>
                <button aria-label="展开"><Caret $w={15} $h={26} $dir="right" $color="#eeeeee" /></button>
                <label htmlFor="matrix">偏移父对象矩阵</label>
                <input id="matrix" />
              </MatrixRow>
            </SectionBody>
            <Header text="枢轴" />
            <SectionBody $last>
              <Check text="显示旋转枢轴" />
              <Check text="显示缩放枢轴" />
            </SectionBody>
            <Header text="局部空间" nested closed />
            <Header text="世界空间" nested />
          </Clip>
          <Tooltip role="tooltip">倒角组件: 沿选定边或面创建倒角</Tooltip>
        </Attributes>
      </Main>
    </Page>
  );
}
